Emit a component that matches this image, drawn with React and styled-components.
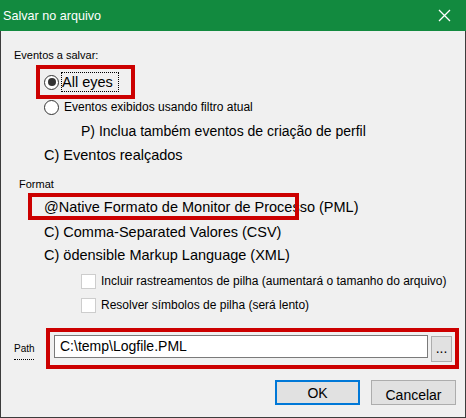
import React from "react";
import styled, { createGlobalStyle } from "styled-components";

const GlobalStyle = createGlobalStyle`
  html, body {
    margin: 0;
    padding: 0;
    background: #f0f0f0;
  }
  * {
    box-sizing: border-box;
  }
`;

function App() {
  return (
    <>
      <GlobalStyle />
      <Window>
        <TitleBar>
          <Title>Salvar no arquivo</Title>
          <CloseIcon width="13" height="13" viewBox="0 0 13 13">
            <path d="M1 1 L12 12 M12 1 L1 12" stroke="#fff" strokeWidth="1.3" />
          </CloseIcon>
        </TitleBar>

        <Body>
          <GroupLabel $top={17} $left={13}>Eventos a salvar:</GroupLabel>

          <RedBox $top={3} $left={35} $width={99} $height={34}>
            <Radio $checked />
            <FocusLabel>All eyes</FocusLabel>
          </RedBox>

          <OptionRow $left={43}>
            <Radio />
            <SmallText>Eventos exibidos usando filtro atual</SmallText>
          </OptionRow>

          <OptionText $top={6} $left={80} $size={14}>
            P) Inclua também eventos de criação de perfil
          </OptionText>
          <OptionText $top={4} $left={43}>C) Eventos realçados</OptionText>

          <GroupLabel $top={12} $left={18}>Format</GroupLabel>

          <MarkedLine>
            <OptionText $top={0} $left={43}>
              @Native Formato de Monitor de Processo (PML)
            </OptionText>
            <RedOverlay />
          </MarkedLine>
          <OptionText $top={5} $left={43}>C) Comma-Separated Valores (CSV)</OptionText>
          <OptionText $top={3} $left={43}>C) ödensible Markup Language (XML)</OptionText>

          <CheckRow $top={8}>
            <CheckBox />
            <SmallText>Incluir rastreamentos de pilha (aumentará o tamanho do arquivo)</SmallText>
          </CheckRow>
          <CheckRow $top={8}>
            <CheckBox />
            <SmallText>Resolver símbolos de pilha (será lento)</SmallText>
          </CheckRow>

          <PathRow>
            <PathLabel>Path</PathLabel>
            <RedBox $top={0} $left={0} $width={413} $height={41}>
              <PathInput>C:\temp\Logfile.PML</PathInput>
              <BrowseButton>...</BrowseButton>
            </RedBox>
          </PathRow>

          <ButtonRow>
            <DialogButton $default>OK</DialogButton>
            <DialogButton>Cancelar</DialogButton>
          </ButtonRow>
        </Body>
      </Window>
    </>
  );
}

const Window = styled.div`
  width: 466px;
  height: 418px;
  background: #f0f0f0;
  border: 1px solid #3c3c3c;
  border-top: none;
  display: flex;
  flex-direction: column;
  font-family: "Liberation Sans", Arial, sans-serif;
  color: #000;
`;

const TitleBar = styled.div`
  height: 31px;
  background: #128a3f;
  display: flex;
  align-items: center;
  justify-content: space-between;
  padding: 0 15px 0 3px;
  margin: 0 -1px;
`;

const Title = styled.span`
  color: #fff;
  font-size: 12.6px;
  padding-top: 1px;
`;

const CloseIcon = styled.svg`
  display: block;
`;

const Body = styled.div`
  flex: 1;
  display: flex;
  flex-direction: column;
`;

const GroupLabel = styled.div`
  margin: ${(p) => p.$top}px 0 0 ${(p) => p.$left}px;
  font-size: 11px;
  line-height: 14px;
  height: 14px;
`;

const RedBox = styled.div`
  margin: ${(p) => p.$top}px 0 0 ${(p) => p.$left}px;
  width: ${(p) => p.$width}px;
  height: ${(p) => p.$height}px;
  border: 4px solid #cc0000;
  display: flex;
  align-items: center;
  padding-left: 4px;
  padding-right: 3px;
  flex-shrink: 0;
`;

const Radio = styled.span`
  width: 15px;
  height: 15px;
  border-radius: 50%;
  border: 1px solid #333;
  background: #fff;
  flex-shrink: 0;
  display: flex;
  align-items: center;
  justify-content: center;
  &::after {
    content: "";
    width: 8px;
    height: 8px;
    border-radius: 50%;
    background: ${(p) => (p.$checked ? "#333" : "transparent")};
  }
`;

const FocusLabel = styled.span`
  margin-left: 3px;
  font-size: 14.5px;
  line-height: 16px;
  padding: 1px 0 1px 0;
  width: 56px;
  outline: 1px dotted #000;
  outline-offset: 0;
`;

const OptionRow = styled.div`
  margin-left: ${(p) => p.$left}px;
  height: 16px;
  display: flex;
  align-items: center;
  gap: 5px;
`;

const SmallText = styled.span`
  font-size: 12px;
  line-height: 16px;
  white-space: nowrap;
`;

const OptionText = styled.div`
  margin: ${(p) => p.$top}px 0 0 ${(p) => p.$left}px;
  font-size: ${(p) => p.$size || 14.5}px;
  line-height: 20px;
  height: 20px;
  white-space: nowrap;
`;

const MarkedLine = styled.div`
  position: relative;
  margin-top: 6px;
`;

const RedOverlay = styled.div`
  position: absolute;
  left: 27px;
  top: -4px;
  width: 271px;
  height: 27px;
  border: 4px solid #cc0000;
  pointer-events: none;
`;

const CheckRow = styled.div`
  margin: ${(p) => p.$top}px 0 0 80px;
  height: 16px;
  display: flex;
  align-items: center;
  gap: 5px;
`;

const CheckBox = styled.span`
  width: 15px;
  height: 15px;
  background: #fff;
  border: 1px solid #cdcdcd;
  flex-shrink: 0;
`;

const PathRow = styled.div`
  margin-top: 15px;
  display: flex;
  align-items: center;
`;

const PathLabel = styled.span`
  width: 45px;
  padding-left: 13px;
  font-size: 10px;
  line-height: 12px;
  position: relative;
  &::after {
    content: "";
    position: absolute;
    left: 13px;
    bottom: -5px;
    width: 20px;
    border-bottom: 1px dotted #000;
  }
`;

const PathInput = styled.div`
  width: 376px;
  height: 23px;
  background: #fff;
  border: 1px solid #7a7a7a;
  font-size: 14px;
  line-height: 21px;
  padding-left: 5px;
  align-self: flex-start;
  margin-top: 3px;
`;

const BrowseButton = styled.div`
  width: 21px;
  height: 26px;
  margin-left: 3px;
  background: #e1e1e1;
  border: 1px solid #adadad;
  font-size: 14px;
  display: flex;
  align-items: center;
  justify-content: center;
  padding-bottom: 2px;
  align-self: flex-start;
  margin-top: 4px;
`;

const ButtonRow = styled.div`
  margin-top: 11px;
  display: flex;
  justify-content: flex-end;
  gap: 11px;
  padding-right: 9px;
`;

const DialogButton = styled.div`
  width: 85px;
  height: 25px;
  background: #e1e1e1;
  border: ${(p) => (p.$default ? "2px solid #0078d7" : "1px solid #adadad")};
  font-size: 14px;
  display: flex;
  align-items: center;
  justify-content: center;
  padding-top: ${(p) => (p.$default ? "0" : "4px")};
`;

export default App;
